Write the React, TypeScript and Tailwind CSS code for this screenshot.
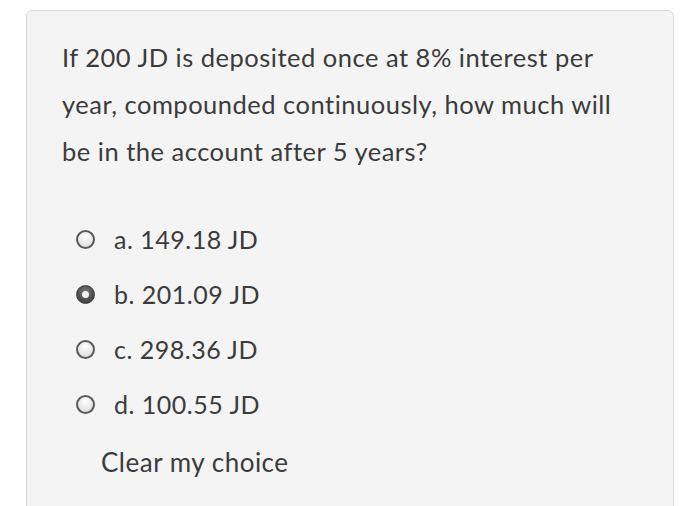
import React from "react";

const options = [
  { key: "a", label: "a. 149.18 JD", checked: false },
  { key: "b", label: "b. 201.09 JD", checked: true },
  { key: "c", label: "c. 298.36 JD", checked: false },
  { key: "d", label: "d. 100.55 JD", checked: false },
];

function Radio({ checked }: { checked: boolean }) {
  if (checked) {
    return (
      <span className="flex h-[19px] w-[19px] items-center justify-center rounded-full border border-[#3a3a3a] bg-[radial-gradient(circle_at_50%_35%,#7a7a7a,#2e2e2e)]">
        <span className="h-[7px] w-[7px] rounded-full bg-[#f2f2f2]" />
      </span>
    );
  }
  return (
    <span className="h-[19px] w-[19px] rounded-full border-2 border-[#5a5a5a] bg-[radial-gradient(circle_at_50%_30%,#ffffff,#d6d6d6)]" />
  );
}

export default function App() {
  return (
    <div className="min-h-[506px] overflow-hidden bg-white pl-[26px] pr-[26px] pt-[10px] font-['Lato',sans-serif]">
      <div className="h-[520px] rounded-t-[6px] border border-[#d9d9d9] bg-[#f4f4f5] pl-[35px] pt-[23px] text-[#3b3b3b]">
        <p className="text-[25.5px] leading-[47px] tracking-[0.5px]">
          If 200 JD is deposited once at 8% interest per
          <br />
          year, compounded continuously, how much will
          <br />
          be in the account after 5 years?
        </p>
        <div className="mt-[37px] flex flex-col">
          {options.map((o) => (
            <label key={o.key} className="flex h-[55px] items-center gap-[19px] pl-[14px]">
              <Radio checked={o.checked} />
              <span className="text-[25px] tracking-[0.5px]">{o.label}</span>
            </label>
          ))}
        </div>
        <div className="mt-[15px] pl-[39px] text-[26px] leading-[30px] tracking-[0.5px]">Clear my choice</div>
      </div>
    </div>
  );
}
